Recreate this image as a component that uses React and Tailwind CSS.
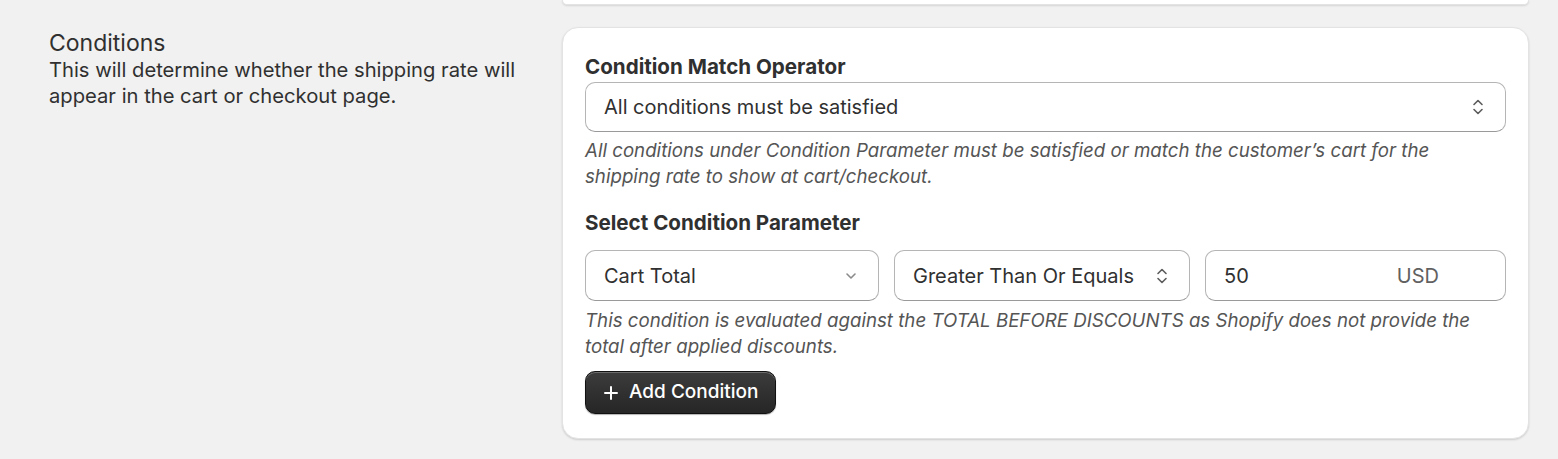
import React, { useState } from "react";

const UpDown = () => (
  <svg width="14" height="20" viewBox="0 0 14 20" fill="none" stroke="#5c5c5c" strokeWidth="1.6" strokeLinecap="round" strokeLinejoin="round">
    <path d="M3 7.5 7 3.5l4 4" />
    <path d="M3 12.5l4 4 4-4" />
  </svg>
);

const Down = () => (
  <svg width="14" height="10" viewBox="0 0 14 10" fill="none" stroke="#8a8a8a" strokeWidth="1.6" strokeLinecap="round" strokeLinejoin="round">
    <path d="M3 3l4 4 4-4" />
  </svg>
);

export default function App() {
  const [operator] = useState("All conditions must be satisfied");
  const [amount, setAmount] = useState("50");

  return (
    <div className="min-h-[459px] bg-[#f1f1f1] text-[#303030] font-['Inter',sans-serif] pl-[49px]">
      <div className="flex">
        <div className="w-[513px] shrink-0" />
        <div className="w-[967px] h-[5px] bg-white rounded-b-2xl border-b border-x border-[#e3e3e3] shadow-[0_1px_2px_rgba(0,0,0,0.12)]" />
      </div>

      <div className="flex pt-[22px] pb-[20px]">
        <div className="w-[513px] shrink-0 pt-[2px]">
          <h2 className="text-[23px] leading-[28px] text-[#303030]">Conditions</h2>
          <p className="text-[20.2px] leading-[26px] text-[#303030] w-[480px]">
            This will determine whether the shipping rate will appear in the cart or checkout page.
          </p>
        </div>

        <div className="w-[967px] min-w-0 bg-white rounded-2xl border border-[#e3e3e3] shadow-[0_1px_2px_rgba(0,0,0,0.15)] px-[22px] pt-[26px] pb-[24px]">
          <div className="text-[20.6px] leading-[26px] font-bold">Condition Match Operator</div>
          <div className="mt-[2px] h-[50px] rounded-[10px] border border-[#b5b5b5] border-b-[#9a9a9a] flex items-center justify-between pl-[18px] pr-[20px] text-[20px]">
            <span>{operator}</span>
            <UpDown />
          </div>
          <p className="mt-[6px] text-[18.7px] leading-[26px] italic text-[#555] pr-[20px]">
            All conditions under Condition Parameter must be satisfied or match the customer’s cart for the shipping rate to show at cart/checkout.
          </p>

          <div className="mt-[20px] text-[20.6px] leading-[26px] font-bold">Select Condition Parameter</div>
          <div className="mt-[14px] flex gap-[15px]">
            <div className="w-[294px] h-[51px] rounded-[10px] border border-[#b5b5b5] border-b-[#9a9a9a] flex items-center justify-between pl-[18px] pr-[20px] text-[20px]">
              <span>Cart Total</span>
              <Down />
            </div>
            <div className="w-[296px] h-[51px] rounded-[10px] border border-[#b5b5b5] border-b-[#9a9a9a] flex items-center justify-between pl-[18px] pr-[20px] text-[20px]">
              <span>Greater Than Or Equals</span>
              <UpDown />
            </div>
            <div className="flex-1 min-w-0 h-[51px] rounded-[10px] border border-[#b5b5b5] border-b-[#9a9a9a] flex items-center pl-[18px] pr-[66px] text-[20px]">
              <input
                className="flex-1 min-w-0 w-0 outline-none bg-transparent"
                value={amount}
                onChange={(e) => setAmount(e.target.value)}
              />
              <span className="text-[#616161]">USD</span>
            </div>
          </div>
          <p className="mt-[7px] text-[18.7px] leading-[26px] italic text-[#555] pr-[20px]">
            This condition is evaluated against the TOTAL BEFORE DISCOUNTS as Shopify does not provide the total after applied discounts.
          </p>

          <button className="mt-[11px] h-[43px] px-[17px] rounded-[10px] bg-gradient-to-b from-[#3c3c3c] to-[#262626] border border-[#111] shadow-[inset_0_1px_0_rgba(255,255,255,0.25),0_1px_1px_rgba(0,0,0,0.3)] text-white text-[19px] font-medium flex items-center gap-[10px]">
            <svg width="16" height="16" viewBox="0 0 16 16" stroke="white" strokeWidth="2" strokeLinecap="round">
              <path d="M8 2v12M2 8h12" />
            </svg>
            Add Condition
          </button>
        </div>
      </div>
    </div>
  );
}
